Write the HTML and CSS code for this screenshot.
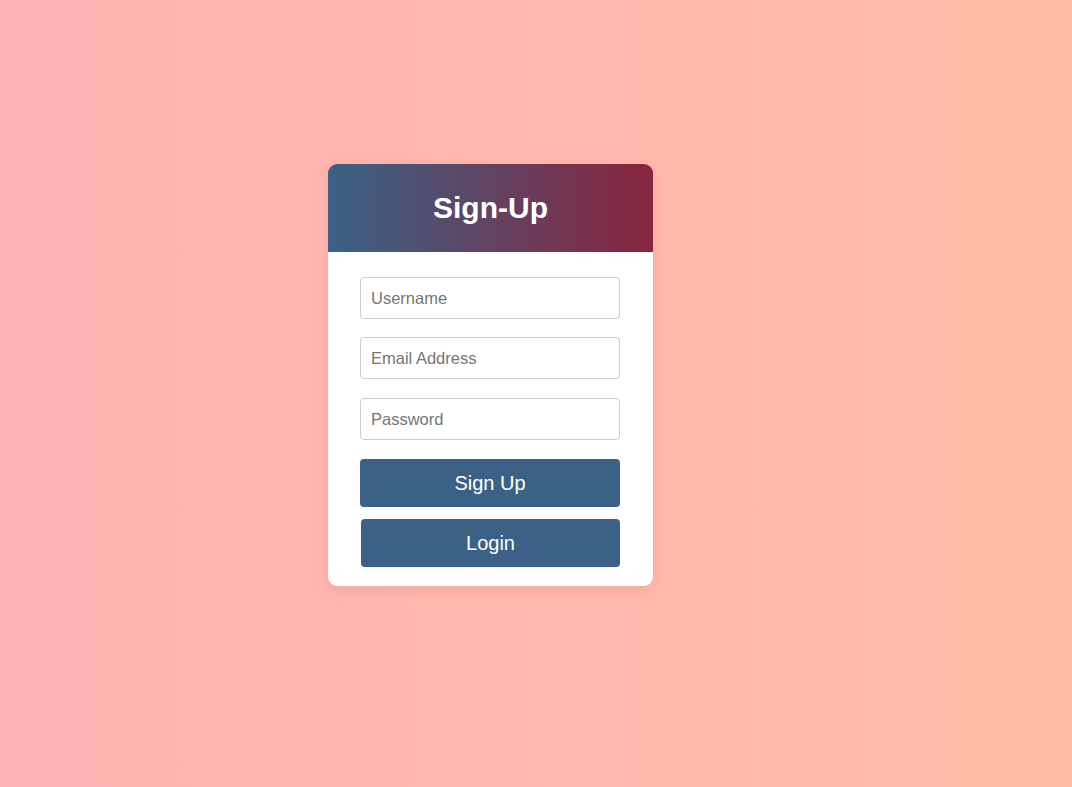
FILE: index.html
```html
<!DOCTYPE html>
<html lang="en">
<head>
<meta charset="utf-8">
<title>Sign-Up</title>
<link rel="stylesheet" href="styles.css">
</head>
<body>
<div class="page">
  <div class="card">
    <div class="card-header">
      <h1 class="title">Sign-Up</h1>
    </div>
    <form class="card-body">
      <input class="field" type="text" placeholder="Username">
      <input class="field field-2" type="email" placeholder="Email Address">
      <input class="field field-3" type="password" placeholder="Password">
      <button class="btn" type="button">Sign Up</button>
      <button class="btn btn-login" type="button">Login</button>
    </form>
  </div>
</div>
</body>
</html>
```
FILE: styles.css
```css
* { box-sizing: border-box; }
html, body {
  margin: 0;
  height: 100%;
}
body {
  font-family: "Liberation Sans", Arial, sans-serif;
  background: linear-gradient(to right, #ffb3b4, #ffbda6);
}
.page {
  display: flex;
  justify-content: center;
  padding-top: 164px;
  padding-right: 91px;
}
.card {
  width: 325px;
  background: #fff;
  border-radius: 9px;
  overflow: hidden;
  box-shadow: 0 4px 14px rgba(220, 120, 120, 0.25);
}
.card-header {
  height: 88px;
  display: flex;
  align-items: center;
  justify-content: center;
  background: linear-gradient(to right, #3a6186, #89253e);
}
.title {
  margin: 0;
  color: #fff;
  font-size: 30px;
  font-weight: bold;
}
.card-body {
  display: flex;
  flex-direction: column;
  align-items: flex-start;
  padding: 25px 0 19px 32px;
}
.field {
  width: 260px;
  height: 42px;
  margin-bottom: 18px;
  padding: 0 10px;
  border: 1px solid #cccccc;
  border-radius: 4px;
  font-family: inherit;
  font-size: 16.5px;
  color: #333;
  background: #fff;
}
.field::placeholder { color: #757575; }
.field-2 { margin-bottom: 19px; }
.field-3 { margin-bottom: 19px; }
.btn {
  width: 260px;
  height: 48px;
  border: none;
  border-radius: 4px;
  background: #3b6186;
  color: #fff;
  font-family: inherit;
  font-size: 20px;
}
.btn-login {
  margin-top: 12px;
  width: 259px;
  margin-left: 1px;
}
```
